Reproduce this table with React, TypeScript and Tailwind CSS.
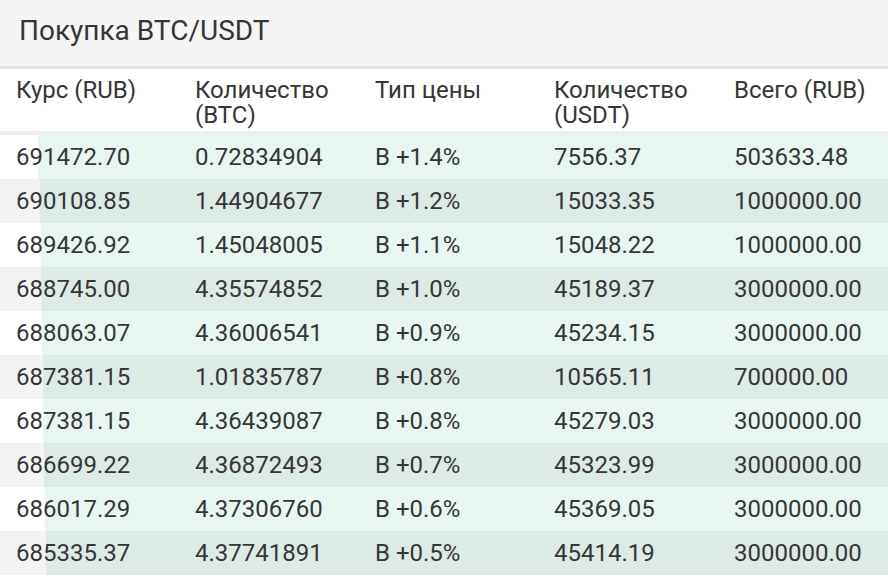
import React from 'react';

interface Order {
  rate: string;
  btc: string;
  type: string;
  usdt: string;
  total: string;
  depth: number;
}

const orders: Order[] = [
  { rate: '691472.70', btc: '0.72834904', type: 'B +1.4%', usdt: '7556.37', total: '503633.48', depth: 38 },
  { rate: '690108.85', btc: '1.44904677', type: 'B +1.2%', usdt: '15033.35', total: '1000000.00', depth: 40 },
  { rate: '689426.92', btc: '1.45048005', type: 'B +1.1%', usdt: '15048.22', total: '1000000.00', depth: 41 },
  { rate: '688745.00', btc: '4.35574852', type: 'B +1.0%', usdt: '45189.37', total: '3000000.00', depth: 41 },
  { rate: '688063.07', btc: '4.36006541', type: 'B +0.9%', usdt: '45234.15', total: '3000000.00', depth: 42 },
  { rate: '687381.15', btc: '1.01835787', type: 'B +0.8%', usdt: '10565.11', total: '700000.00', depth: 43 },
  { rate: '687381.15', btc: '4.36439087', type: 'B +0.8%', usdt: '45279.03', total: '3000000.00', depth: 43 },
  { rate: '686699.22', btc: '4.36872493', type: 'B +0.7%', usdt: '45323.99', total: '3000000.00', depth: 44 },
  { rate: '686017.29', btc: '4.37306760', type: 'B +0.6%', usdt: '45369.05', total: '3000000.00', depth: 45 },
  { rate: '685335.37', btc: '4.37741891', type: 'B +0.5%', usdt: '45414.19', total: '3000000.00', depth: 46 },
];

const headers = ['Курс (RUB)', 'Количество (BTC)', 'Тип цены', 'Количество (USDT)', 'Всего (RUB)'];

const cols = 'grid grid-cols-[179px_180px_179px_180px_1fr] pl-4';

const App = () => {
  return (
    <div className="w-[888px] h-[577px] overflow-hidden bg-white text-[#363636] font-['Roboto',sans-serif]">
      <div className="h-[69px] bg-[#f5f5f5] flex items-center pl-[19px] pb-[4px] text-[28px] border-b-[3px] border-[#e6e6e6]">
        Покупка BTC/USDT
      </div>
      <div className={`${cols} h-[66px] pt-[9px] text-[24px] leading-[25px] border-b-[4px] border-[#efefef]`}>
        {headers.map((h, idx) => (
          <div key={idx}>{h}</div>
        ))}
      </div>
      {orders.map((o, idx) => (
        <div key={idx} className={`relative h-[44px] ${idx % 2 ? 'bg-[#f3f3f3]' : 'bg-white'}`}>
          <div className="absolute inset-y-0 right-0 bg-[rgba(25,165,125,0.1)]" style={{ left: o.depth }} />
          <div className={`${cols} relative h-full items-center text-[24px]`}>
            <div>{o.rate}</div>
            <div>{o.btc}</div>
            <div>{o.type}</div>
            <div>{o.usdt}</div>
            <div>{o.total}</div>
          </div>
        </div>
      ))}
    </div>
  );
};

export default App;
